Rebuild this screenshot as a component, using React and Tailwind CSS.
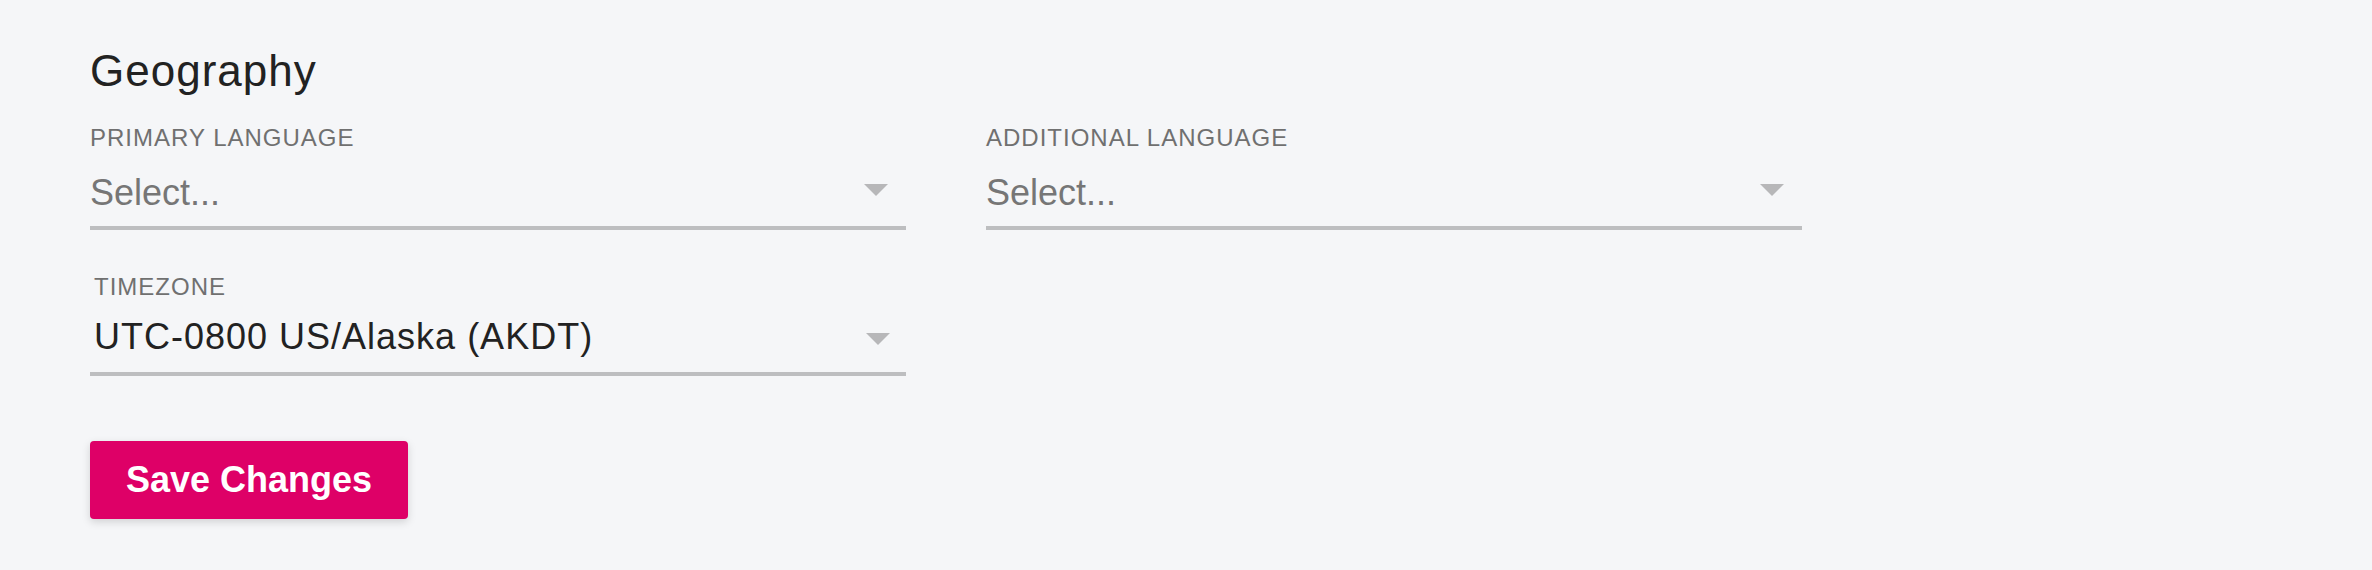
const Caret = () => (
    <svg width="24" height="12" viewBox="0 0 24 12" className="shrink-0">
        <path d="M0 0 L24 0 L12 12 Z" fill="#b7b7b9" />
    </svg>
);

const SelectField = ({ label, value, placeholder }) => {
    return (
        <div className="flex flex-col">
            <label className="text-[24px] leading-[28px] tracking-[1px] text-[#707070] uppercase">{label}</label>
            <div className="mt-[21px] flex items-start justify-between border-b-[4px] border-[#bdbec0] pb-[13px]">
                <span className="text-[36px] leading-[40px] text-[#767676]">{placeholder}</span>
                <span className="mt-[11px] mr-[18px]">
                    <Caret />
                </span>
            </div>
        </div>
    );
};

const App = () => {
    return (
        <div className="min-h-screen bg-[#f5f6f8] pl-[90px] pt-[46px] font-['Liberation_Sans',Arial,sans-serif]">
            <h2 className="text-[44px] leading-[50px] tracking-[1px] text-[#222222]">Geography</h2>

            {/* language row */}
            <div className="mt-[28px] grid grid-cols-[816px_816px] gap-x-[80px]">
                <SelectField label="Primary Language" placeholder="Select..." />
                <SelectField label="Additional Language" placeholder="Select..." />
            </div>

            {/* timezone */}
            <div className="mt-[43px] w-[816px] flex flex-col">
                <label className="pl-[4px] text-[24px] leading-[28px] tracking-[1px] text-[#707070] uppercase">Timezone</label>
                <div className="mt-[16px] flex items-start justify-between border-b-[4px] border-[#bdbec0] pb-[15px] pl-[4px]">
                    <span className="text-[36px] leading-[40px] tracking-[1px] text-[#222222]">UTC-0800 US/Alaska (AKDT)</span>
                    <span className="mt-[16px] mr-[16px]">
                        <Caret />
                    </span>
                </div>
            </div>

            <button className="mt-[65px] flex h-[78px] w-[318px] items-center justify-center rounded-[4px] bg-[#de0067] text-[36px] font-bold text-white shadow-[0_3px_8px_rgba(0,0,0,0.15)]">
                Save Changes
            </button>
        </div>
    );
};

export default App;
